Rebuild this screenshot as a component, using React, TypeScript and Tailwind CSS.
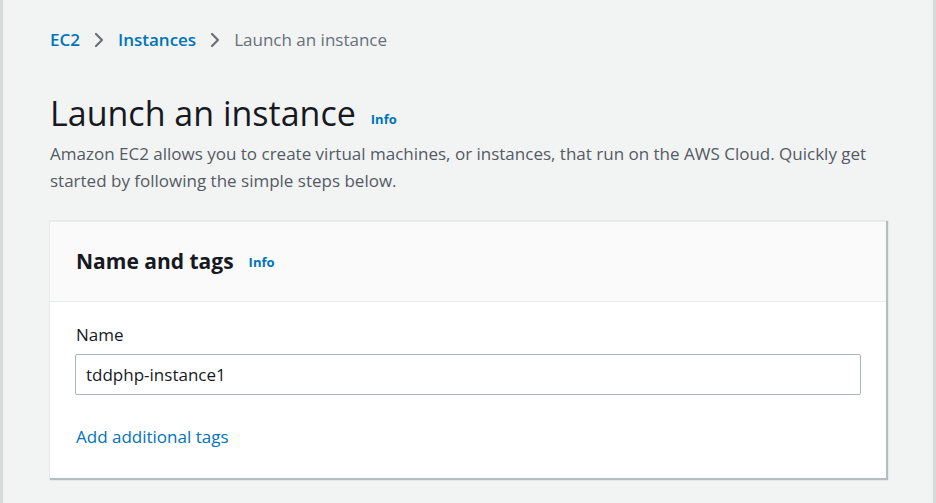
import React from "react";

function Chevron() {
  return (
    <svg width="12" height="16" viewBox="0 0 12 16" className="mx-[13px]" fill="none">
      <path d="M3 2 L9 8 L3 14" stroke="#687078" strokeWidth="2.2" strokeLinecap="round" strokeLinejoin="round" />
    </svg>
  );
}

export default function App() {
  return (
    <div
      className="w-[936px] h-[503px] bg-[#f2f3f3] border-l-[3px] border-l-[#d5dbdb] border-r-[3px] border-r-[#d5dbdb] overflow-hidden"
      style={{ fontFamily: '"Open Sans", "Noto Sans", Arial, sans-serif' }}
    >
      <div className="pl-[47px] pr-[47px]">
        <nav className="flex items-center h-[20px] mt-[30px] text-[17px] leading-[20px]">
          <span className="text-[#0073bb] font-semibold">EC2</span>
          <Chevron />
          <span className="text-[#0073bb] font-semibold">Instances</span>
          <Chevron />
          <span className="text-[#687078]">Launch an instance</span>
        </nav>

        <div className="mt-[43px] flex items-end">
          <h1 className="text-[34px] leading-[40px] text-[#16191f] font-normal">Launch an instance</h1>
          <span className="ml-[15px] mb-[4px] text-[13px] font-bold text-[#0073bb]">Info</span>
        </div>
        <p className="mt-[7px] text-[17px] leading-[27px] text-[#545b64] w-[830px]">
          Amazon EC2 allows you to create virtual machines, or instances, that run on the AWS Cloud. Quickly get
          started by following the simple steps below.
        </p>

        <div className="mt-[27px] w-[836px] bg-white shadow-[1px_1px_1px_1px_rgba(0,28,36,0.25)] border-t border-t-[#eaeded]">
          <div className="h-[80px] bg-[#fafafa] border-b border-b-[#eaeded] flex items-center px-[26px]">
            <h2 className="text-[21px] font-bold text-[#16191f]">Name and tags</h2>
            <span className="ml-[15px] mt-[3px] text-[13px] font-bold text-[#0073bb]">Info</span>
          </div>
          <div className="px-[25px] pt-[21px] pb-[30px]">
            <div className="pl-[1px] text-[17px] leading-[24px] text-[#16191f]">Name</div>
            <div className="mt-[7px] h-[41px] w-[786px] border border-[#aab7b8] rounded-[2px] flex items-center px-[10px] text-[17px] text-[#16191f]">
              tddphp-instance1
            </div>
            <div className="mt-[31px] pl-[1px] text-[17px] leading-[22px] text-[#0073bb]">Add additional tags</div>
          </div>
        </div>
      </div>
    </div>
  );
}
